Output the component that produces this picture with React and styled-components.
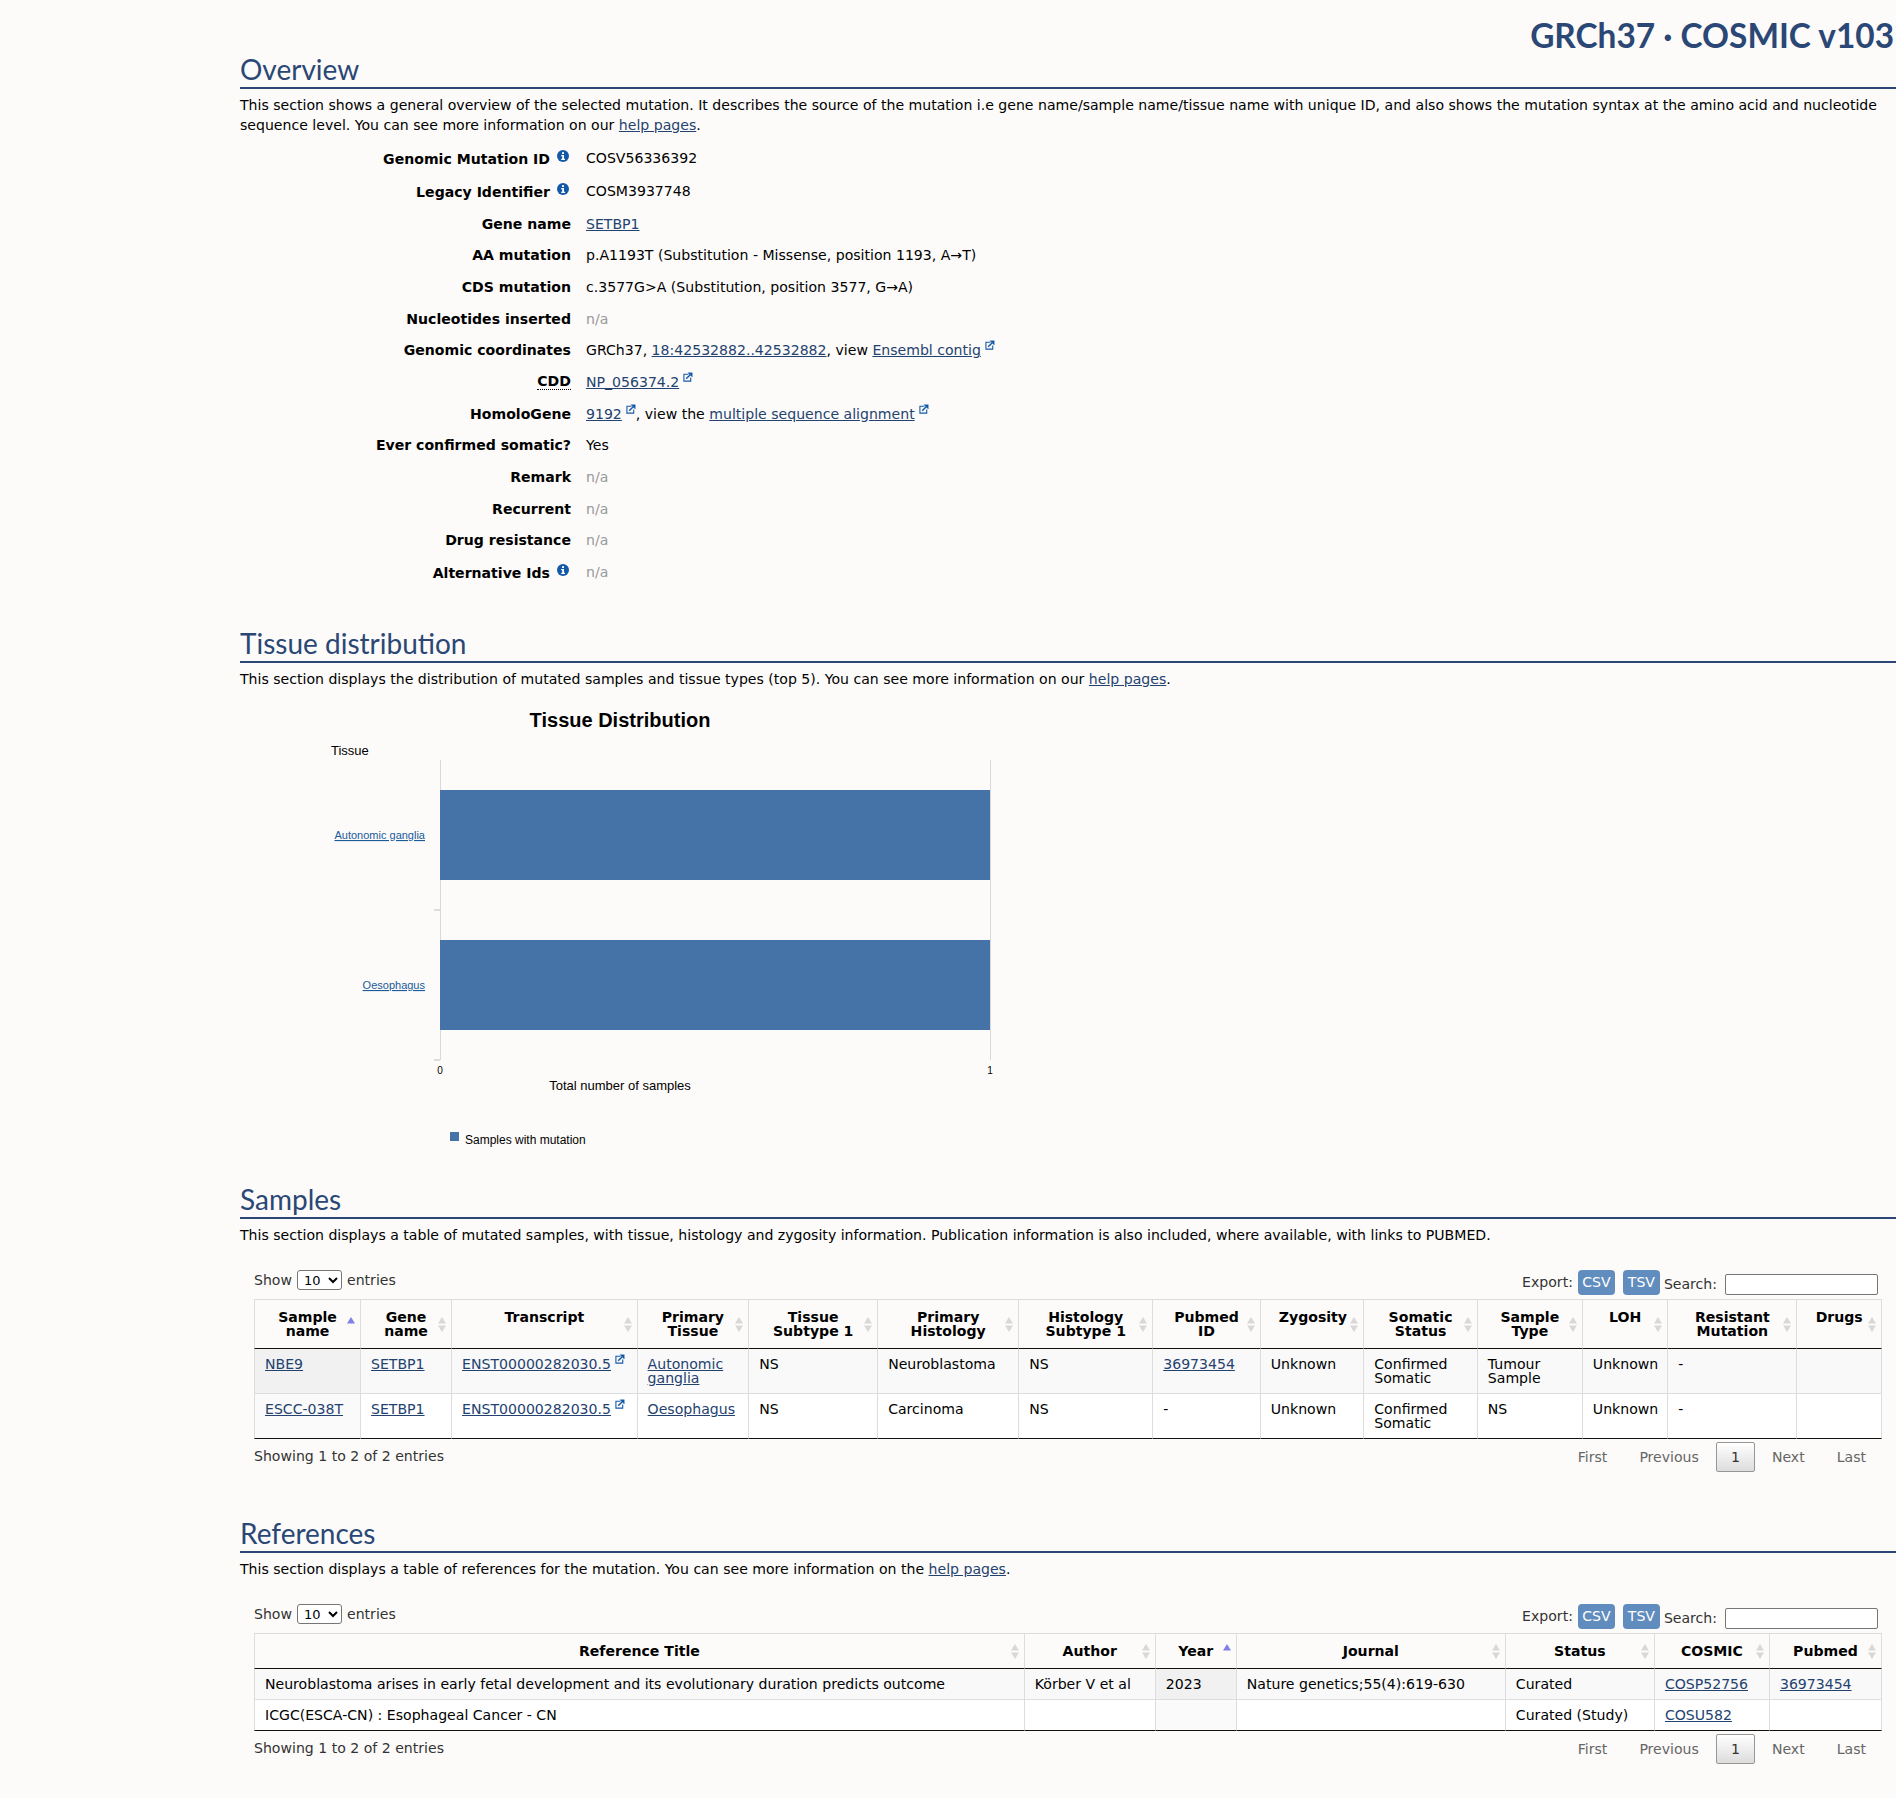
import React from 'react'
import styled, { createGlobalStyle } from 'styled-components'

const GlobalStyle = createGlobalStyle`
  html, body {
    margin: 0;
    padding: 0;
    background: #fcfbf9;
  }
  body {
    font-family: "DejaVu Sans", Verdana, sans-serif;
    font-size: 14.08px;
    line-height: 20px;
    color: #000;
    overflow-x: hidden;
  }
`

const Page = styled.div`
  width: 1896px;
  height: 1798px;
  padding-left: 240px;
  box-sizing: border-box;
  overflow: hidden;
`

const Title = styled.h1`
  margin: 0;
  height: 34px;
  padding: 18px 2px 0 0;
  text-align: right;
  font-family: Lato, "Open Sans", sans-serif;
  font-weight: 700;
  font-size: 33.4px;
  line-height: 34px;
  color: #2a4775;
  white-space: nowrap;
`

const Section = styled.section`
  margin-bottom: ${(p) => p.$after || 0}px;
`

const Heading = styled.h2`
  margin: 0 0 6px;
  height: 35px;
  border-bottom: 2px solid #2a4775;
  font-family: Lato, "Open Sans", sans-serif;
  font-weight: 400;
  font-size: 28px;
  line-height: 34px;
  color: #2a4775;
`

const Intro = styled.p`
  margin: 0;
  padding-right: 18px;
`

const TextLink = styled.a`
  color: #24426f;
  text-decoration: underline;
`

const Details = styled.dl`
  margin: 6px 0 0;
`

const DetailRow = styled.div`
  display: flex;
  height: ${(p) => (p.$tall ? 33.5 : 31.65)}px;
  align-items: center;
`

const Label = styled.dt`
  width: 331px;
  padding-top: ${(p) => (p.$info ? 2 : 0)}px;
  display: flex;
  justify-content: flex-end;
  align-items: flex-start;
  font-weight: 700;
  white-space: nowrap;
`

const Value = styled.dd`
  margin: 0 0 0 15px;
  color: ${(p) => (p.$muted ? '#999' : '#000')};
`

const Abbr = styled.span`
  border-bottom: 1px dotted #000;
  line-height: 15px;
`

const InfoMark = styled.svg`
  width: 12px;
  height: 12px;
  margin: 1px 2px 0 7px;
`

const OutMark = styled.svg`
  position: relative;
  top: -5px;
  width: 10px;
  height: 10px;
  margin-left: 4px;
`

const NoWrap = styled.span`
  white-space: nowrap;
`

const Chart = styled.svg`
  display: block;
  width: 800px;
  height: 492px;
  margin-top: 1px;
  font-family: "Liberation Sans", Arial, sans-serif;
`

const TableBlock = styled.div`
  margin: 0 14px;
`

const Controls = styled.div`
  display: flex;
  justify-content: space-between;
  height: 29px;
  padding-top: 25px;
  color: #333;
`

const ShowBox = styled.label`
  display: flex;
  align-items: center;
  gap: 5px;
  height: 20px;
`

const PageSelect = styled.select`
  width: 45px;
  height: 20px;
  padding: 0 0 0 2px;
  border: 1px solid #767676;
  border-radius: 3px;
  background: #fff;
  font-family: "DejaVu Sans", Verdana, sans-serif;
  font-size: 13px;
`

const ExportBox = styled.div`
  display: flex;
  align-items: flex-start;
  padding-right: 4px;
`

const ExportLabel = styled.span`
  line-height: 25px;
  margin-right: 5px;
`

const ExportButton = styled.a`
  width: 37px;
  height: 25px;
  margin-right: 8px;
  border-radius: 4px;
  background: #608dbd;
  color: #fff;
  line-height: 25px;
  text-align: center;
  &:last-of-type {
    margin-right: 4px;
  }
`

const SearchLabel = styled.label`
  display: flex;
  align-items: center;
  gap: 8px;
  height: 25px;
  margin-top: 1px;
`

const SearchInput = styled.input`
  width: 153px;
  height: 21px;
  padding: 0;
  margin-top: 2px;
  box-sizing: border-box;
  border: 1px solid #767676;
  border-radius: 2px;
  background: #fff;
`

const Grid = styled.table`
  width: 1628px;
  table-layout: fixed;
  border-collapse: separate;
  border-spacing: 0;
  line-height: 14px;
`

const Col = styled.col`
  width: ${(p) => p.$w}px;
`

const HeadCell = styled.th`
  position: relative;
  height: ${(p) => (p.$compact ? 14 : 28)}px;
  padding: 10px 18px;
  vertical-align: top;
  border-top: 1px solid #ddd;
  border-right: 1px solid #ddd;
  border-bottom: 1px solid #111;
  font-weight: 700;
  text-align: center;
  &:first-child {
    border-left: 1px solid #ddd;
  }
`

const SortMark = styled.svg`
  position: absolute;
  right: 5px;
  top: 50%;
  width: 8px;
  height: 15px;
  margin-top: -7.5px;
`

const Row = styled.tr`
  background: ${(p) => (p.$odd ? '#f9f9f9' : '#fff')};
`

const Cell = styled.td`
  padding: 8px 10px;
  vertical-align: top;
  border-right: 1px solid #ddd;
  border-bottom: 1px solid ${(p) => (p.$last ? '#111' : '#ddd')};
  background: ${(p) => (p.$sorted ? (p.$odd ? '#f1f1f1' : '#fafafa') : 'transparent')};
  &:first-child {
    border-left: 1px solid #ddd;
  }
`

const Footer = styled.div`
  display: flex;
  justify-content: space-between;
  color: #333;
`

const Showing = styled.div`
  padding-top: 7px;
`

const Pager = styled.div`
  display: flex;
  align-items: center;
  height: 30px;
  margin-top: 3px;
`

const PageLink = styled.a`
  padding: 0 16px;
  color: #666;
  line-height: 30px;
  ${(p) =>
    p.$current &&
    `
    width: 39px;
    height: 30px;
    margin: 0 1px;
    padding: 0;
    box-sizing: border-box;
    border: 1px solid #979797;
    border-radius: 2px;
    background: linear-gradient(to bottom, #fff 0%, #dcdcdc 100%);
    color: #333;
    line-height: 28px;
    text-align: center;
  `}
`

const BLUE = '#1458a8'

const Info = () => (
  <InfoMark viewBox="0 0 12 12">
    <circle cx="6" cy="6" r="6" fill={BLUE} />
    <rect x="5" y="2.2" width="2" height="1.8" fill="#fff" />
    <path d="M4.2 5h2.8v3.8h1v1.2H4.2V8.8h1V6.2h-1z" fill="#fff" />
  </InfoMark>
)

const Out = () => (
  <OutMark viewBox="0 0 11 11" fill="none" stroke={BLUE}>
    <path d="M6 2.5H1v7.5h7.5V6" strokeWidth="1.2" />
    <path d="M3.5 7.5L8 3" strokeWidth="1.6" />
    <path d="M5.5 .8h4.7v4.7z" fill={BLUE} strokeWidth=".4" />
  </OutMark>
)

const Sort = ({ active }) => (
  <SortMark viewBox="0 0 8 15">
    {active ? (
      <path d="M4 0l4 6.5H0z" fill="#7f80e8" />
    ) : (
      <>
        <path d="M4 0l4 6.5H0z" fill="#d8d8d8" />
        <path d="M4 15l4-6.5H0z" fill="#d8d8d8" />
      </>
    )}
  </SortMark>
)

const overview = [
  ['Genomic Mutation ID', 'COSV56336392', true],
  ['Legacy Identifier', 'COSM3937748', true],
  ['Gene name', <TextLink key="g">SETBP1</TextLink>],
  ['AA mutation', 'p.A1193T (Substitution - Missense, position 1193, A→T)'],
  ['CDS mutation', 'c.3577G>A (Substitution, position 3577, G→A)'],
  ['Nucleotides inserted', null],
  [
    'Genomic coordinates',
    <>
      GRCh37, <TextLink>18:42532882..42532882</TextLink>, view <TextLink>Ensembl contig</TextLink>
      <Out />
    </>,
  ],
  [
    <Abbr key="c">CDD</Abbr>,
    <>
      <TextLink>NP_056374.2</TextLink>
      <Out />
    </>,
  ],
  [
    'HomoloGene',
    <>
      <TextLink>9192</TextLink>
      <Out />, view the <TextLink>multiple sequence alignment</TextLink>
      <Out />
    </>,
  ],
  ['Ever confirmed somatic?', 'Yes'],
  ['Remark', null],
  ['Recurrent', null],
  ['Drug resistance', null],
  ['Alternative Ids', null, true],
]

const sampleCols = [
  ['Sample name', 107, true],
  ['Gene name', 91],
  ['Transcript', 185.5],
  ['Primary Tissue', 111.5],
  ['Tissue Subtype 1', 129],
  ['Primary Histology', 141],
  ['Histology Subtype 1', 134],
  ['Pubmed ID', 107.5],
  ['Zygosity', 103.5],
  ['Somatic Status', 113.5],
  ['Sample Type', 105],
  ['LOH', 85.5],
  ['Resistant Mutation', 129],
  ['Drugs', 84.5],
]

const transcript = (
  <NoWrap>
    <TextLink>ENST00000282030.5</TextLink>
    <Out />
  </NoWrap>
)

const sampleRows = [
  [
    <TextLink key="s">NBE9</TextLink>,
    <TextLink key="g">SETBP1</TextLink>,
    transcript,
    <TextLink key="t">Autonomic ganglia</TextLink>,
    'NS',
    'Neuroblastoma',
    'NS',
    <TextLink key="p">36973454</TextLink>,
    'Unknown',
    'Confirmed Somatic',
    'Tumour Sample',
    'Unknown',
    '-',
    '',
  ],
  [
    <TextLink key="s">ESCC-038T</TextLink>,
    <TextLink key="g">SETBP1</TextLink>,
    transcript,
    <TextLink key="t">Oesophagus</TextLink>,
    'NS',
    'Carcinoma',
    'NS',
    '-',
    'Unknown',
    'Confirmed Somatic',
    'NS',
    'Unknown',
    '-',
    '',
  ],
]

const refCols = [
  ['Reference Title', 770.5],
  ['Author', 131],
  ['Year', 81, true],
  ['Journal', 269],
  ['Status', 149],
  ['COSMIC', 115],
  ['Pubmed', 112],
]

const refRows = [
  [
    'Neuroblastoma arises in early fetal development and its evolutionary duration predicts outcome',
    'Körber V et al',
    '2023',
    'Nature genetics;55(4):619-630',
    'Curated',
    <TextLink key="c">COSP52756</TextLink>,
    <TextLink key="p">36973454</TextLink>,
  ],
  [
    'ICGC(ESCA-CN) : Esophageal Cancer - CN',
    '',
    '',
    '',
    'Curated (Study)',
    <TextLink key="c">COSU582</TextLink>,
    '',
  ],
]

function DataTable({ cols, rows, compact }) {
  return (
    <TableBlock>
      <Controls>
        <ShowBox>
          Show
          <PageSelect defaultValue="10">
            <option>10</option>
          </PageSelect>
          entries
        </ShowBox>
        <ExportBox>
          <ExportLabel>Export:</ExportLabel>
          <ExportButton>CSV</ExportButton>
          <ExportButton>TSV</ExportButton>
          <SearchLabel>
            Search:
            <SearchInput />
          </SearchLabel>
        </ExportBox>
      </Controls>
      <Grid>
        <colgroup>
          {cols.map(([name, w]) => (
            <Col key={name} $w={w} />
          ))}
        </colgroup>
        <thead>
          <tr>
            {cols.map(([name, , sorted]) => (
              <HeadCell key={name} $compact={compact}>
                {name}
                <Sort active={sorted} />
              </HeadCell>
            ))}
          </tr>
        </thead>
        <tbody>
          {rows.map((row, r) => (
            <Row key={r} $odd={r === 0}>
              {row.map((cell, c) => (
                <Cell key={c} $odd={r === 0} $last={r === rows.length - 1} $sorted={cols[c][2]}>
                  {cell}
                </Cell>
              ))}
            </Row>
          ))}
        </tbody>
      </Grid>
      <Footer>
        <Showing>Showing 1 to 2 of 2 entries</Showing>
        <Pager>
          <PageLink>First</PageLink>
          <PageLink>Previous</PageLink>
          <PageLink $current>1</PageLink>
          <PageLink>Next</PageLink>
          <PageLink>Last</PageLink>
        </Pager>
      </Footer>
    </TableBlock>
  )
}

function TissueChart() {
  return (
    <Chart viewBox="0 0 800 492">
      <text x="380" y="37" textAnchor="middle" fontSize="20" fontWeight="700">
        Tissue Distribution
      </text>
      <text x="91" y="65" fontSize="13">
        Tissue
      </text>
      <path d="M200.5 70V370M750.5 70V370" stroke="#d8d8d8" />
      <path d="M194 220h6M194 370h6" stroke="#c0c0c0" />
      <rect x="200" y="100" width="550" height="90" fill="#4572a7" />
      <rect x="200" y="250" width="550" height="90" fill="#4572a7" />
      <text x="185" y="149" textAnchor="end" fontSize="11" fill="#1a5a9a" textDecoration="underline">
        Autonomic ganglia
      </text>
      <text x="185" y="299" textAnchor="end" fontSize="11" fill="#1a5a9a" textDecoration="underline">
        Oesophagus
      </text>
      <text x="200" y="384" textAnchor="middle" fontSize="10">
        0
      </text>
      <text x="750" y="384" textAnchor="middle" fontSize="10">
        1
      </text>
      <text x="380" y="400" textAnchor="middle" fontSize="13">
        Total number of samples
      </text>
      <rect x="210" y="442" width="9" height="9" fill="#4572a7" />
      <text x="225" y="454" fontSize="12">
        Samples with mutation
      </text>
    </Chart>
  )
}

export default function App() {
  return (
    <Page>
      <GlobalStyle />
      <Title>GRCh37 · COSMIC v103</Title>
      <Section $after={38.35}>
        <Heading>Overview</Heading>
        <Intro>
          This section shows a general overview of the selected mutation. It describes the source of the mutation i.e
          gene name/sample name/tissue name with unique ID, and also shows the mutation syntax at the amino acid and
          nucleotide sequence level. You can see more information on our <TextLink>help pages</TextLink>.
        </Intro>
        <Details>
          {overview.map(([label, value, info], i) => (
            <DetailRow key={i} $tall={i < 2}>
              <Label $info={info}>
                {label}
                {info && <Info />}
              </Label>
              <Value $muted={value === null}>{value === null ? 'n/a' : value}</Value>
            </DetailRow>
          ))}
        </Details>
      </Section>
      <Section>
        <Heading>Tissue distribution</Heading>
        <Intro>
          This section displays the distribution of mutated samples and tissue types (top 5). You can see more
          information on our <TextLink>help pages</TextLink>.
        </Intro>
        <TissueChart />
      </Section>
      <Section $after={44}>
        <Heading>Samples</Heading>
        <Intro>
          This section displays a table of mutated samples, with tissue, histology and zygosity information. Publication
          information is also included, where available, with links to PUBMED.
        </Intro>
        <DataTable cols={sampleCols} rows={sampleRows} />
      </Section>
      <Section>
        <Heading>References</Heading>
        <Intro>
          This section displays a table of references for the mutation. You can see more information on the{' '}
          <TextLink>help pages</TextLink>.
        </Intro>
        <DataTable cols={refCols} rows={refRows} compact />
      </Section>
    </Page>
  )
}
